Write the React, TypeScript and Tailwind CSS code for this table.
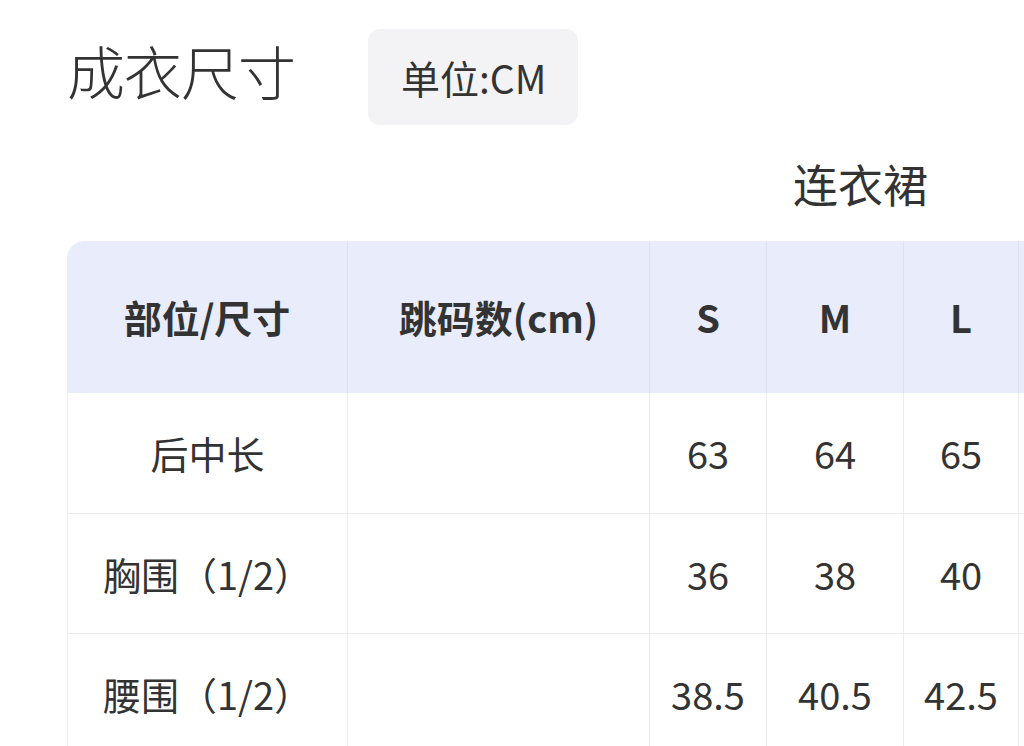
const sizes = ['S', 'M', 'L']

const rows = [
  { part: '后中长', step: '', values: ['63', '64', '65'] },
  { part: '胸围（1/2）', step: '', values: ['36', '38', '40'] },
  { part: '腰围（1/2）', step: '', values: ['38.5', '40.5', '42.5'] },
]

const sizeCols = ['w-[117px]', 'w-[137px]', 'w-[115px]']

export default function App() {
  return (
    <div
      className="w-[1024px] h-[746px] overflow-hidden bg-white text-[#333]"
      style={{ fontFamily: '"Noto Sans CJK SC", "Noto Sans", sans-serif' }}
    >
      <div className="pl-[67px] pt-[29px]">
        <div className="flex items-center">
          <h1 className="mb-[14px] text-[58px] leading-none font-light text-[#333] tracking-[-1px]">成衣尺寸</h1>
          <div className="ml-[73px] h-[96px] pl-[33px] pr-[32px] flex items-center rounded-[12px] bg-[#f3f3f6] text-[39px] leading-none text-[#333]">
            单位:CM
          </div>
        </div>

        <div className="h-[116px] flex items-center pl-[726px] text-[45px] leading-none">连衣裙</div>

        <table className="table-fixed border-separate border-spacing-0 w-[1070px] text-[38px] leading-none">
          <colgroup>
            <col className="w-[281px]" />
            <col className="w-[302px]" />
            {sizeCols.map((c, i) => (
              <col key={i} className={c} />
            ))}
            <col className="w-[118px]" />
          </colgroup>
          <thead>
            <tr className="h-[152px] bg-[#e8ecfb]">
              <th className="rounded-tl-[18px] border-r border-[#dde2f2] font-bold">部位/尺寸</th>
              <th className="border-r border-[#dde2f2] font-bold">跳码数(cm)</th>
              {sizes.map((s) => (
                <th key={s} className="border-r border-[#dde2f2] font-bold">
                  {s}
                </th>
              ))}
              <th className="border-r border-[#dde2f2]"></th>
            </tr>
          </thead>
          <tbody>
            {rows.map((r, i) => (
              <tr key={i} className={i === 0 ? 'h-[121px]' : 'h-[120px]'}>
                <td className="border-l border-r border-b border-[#ececec] text-center">{r.part}</td>
                <td className="border-r border-b border-[#ececec] text-center">{r.step}</td>
                {r.values.map((v, j) => (
                  <td key={j} className="border-r border-b border-[#ececec] text-center">
                    {v}
                  </td>
                ))}
                <td className="border-r border-b border-[#ececec]"></td>
              </tr>
            ))}
          </tbody>
        </table>
      </div>
    </div>
  )
}
